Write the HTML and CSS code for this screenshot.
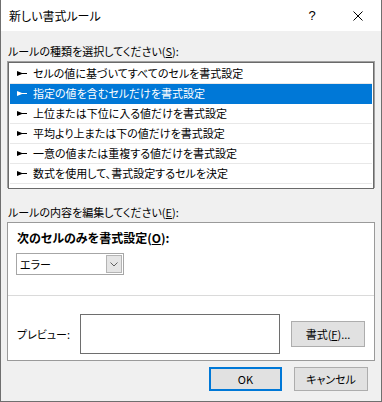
FILE: index.html
```html
<!DOCTYPE html>
<html lang="ja">
<head>
    <meta charset="UTF-8">
    <meta name="viewport" content="width=device-width, initial-scale=1.0">
    <title>新しい書式ルール</title>
    <link rel="stylesheet" href="styles.css">
</head>
<body>
    <div class="window">
        <div class="titlebar">
            <span class="title">新しい書式ルール</span>
            <span class="caption-btn help">?</span>
            <span class="caption-btn close">
                <svg width="10" height="10" viewBox="0 0 10 10"><path d="M0.5 0.5L9.5 9.5M9.5 0.5L0.5 9.5" stroke="#000" stroke-width="1"/></svg>
            </span>
        </div>

        <div class="content">
            <div class="label first">ルールの種類を選択してください(<u>S</u>):</div>
            <div class="listbox">
                <ul class="rules">
                    <li><svg class="arrow" width="10" height="5" viewBox="0 0 10 5"><path d="M0 0L5 2H10V3H5L0 5Z"/></svg>セルの値に基づいてすべてのセルを書式設定</li>
                    <li class="selected"><svg class="arrow" width="10" height="5" viewBox="0 0 10 5"><path d="M0 0L5 2H10V3H5L0 5Z"/></svg>指定の値を含むセルだけを書式設定</li>
                    <li><svg class="arrow" width="10" height="5" viewBox="0 0 10 5"><path d="M0 0L5 2H10V3H5L0 5Z"/></svg>上位または下位に入る値だけを書式設定</li>
                    <li><svg class="arrow" width="10" height="5" viewBox="0 0 10 5"><path d="M0 0L5 2H10V3H5L0 5Z"/></svg>平均より上または下の値だけを書式設定</li>
                    <li><svg class="arrow" width="10" height="5" viewBox="0 0 10 5"><path d="M0 0L5 2H10V3H5L0 5Z"/></svg>一意の値または重複する値だけを書式設定</li>
                    <li><svg class="arrow" width="10" height="5" viewBox="0 0 10 5"><path d="M0 0L5 2H10V3H5L0 5Z"/></svg>数式を使用して、書式設定するセルを決定</li>
                </ul>
            </div>

            <div class="label second">ルールの内容を編集してください(<u>E</u>):</div>
            <div class="panel">
                <div class="panel-top">
                    <div class="bold-label">次のセルのみを書式設定(<u>O</u>):</div>
                    <div class="dropdown">
                        <span class="dropdown-value">エラー</span>
                        <span class="dropdown-btn">
                            <svg width="8" height="5" viewBox="0 0 8 5"><path d="M0.5 0.5L4 4L7.5 0.5" fill="none" stroke="#606060" stroke-width="1"/></svg>
                        </span>
                    </div>
                </div>
                <div class="panel-bottom">
                    <span class="preview-label">プレビュー:</span>
                    <div class="preview"></div>
                    <button class="btn format">書式(<u>F</u>)...</button>
                </div>
            </div>

            <div class="actions">
                <button class="btn default">OK</button>
                <button class="btn">キャンセル</button>
            </div>
        </div>
    </div>
</body>
</html>
```

FILE: styles.css
```css
body {
    margin: 0;
    padding: 0;
    font-family: "Noto Sans CJK JP", "Noto Sans", sans-serif;
    font-size: 11px;
    font-feature-settings: "palt";
    color: #000;
    background: #fff;
}
u {
    text-decoration: underline;
    text-underline-offset: 1px;
}
.window {
    width: 382px;
    height: 402px;
    box-sizing: border-box;
    border: 1px solid #6f6f6f;
    border-top: none;
    display: flex;
    flex-direction: column;
}
.titlebar {
    height: 31px;
    flex: none;
    display: flex;
    align-items: center;
    background: #fff;
}
.title {
    flex: 1;
    padding-left: 8px;
    font-size: 12px;
}
.caption-btn {
    width: 46px;
    height: 31px;
    display: flex;
    align-items: center;
    justify-content: center;
}
.help {
    font-family: "Liberation Sans", sans-serif;
    font-size: 13px;
}
.content {
    flex: 1;
    background: #f0f0f0;
    padding: 0 6px;
}
.label {
    height: 16px;
    line-height: 16px;
    padding-left: 1px;
}
.label.first {
    margin-top: 12px;
}
.label.second {
    margin-top: 16px;
}
.listbox {
    margin-top: 2px;
    border: 1px solid #a0a0a0;
    height: 125px;
    background: #fff;
}
.rules {
    list-style: none;
    margin: 0;
    padding: 1px;
    height: 123px;
    border: 1px solid #6a6a6a;
    background: #fff;
}
.rules li {
    height: 19px;
    line-height: 19px;
    border-bottom: 1px solid #e8e8e8;
    display: flex;
    align-items: center;
    white-space: nowrap;
}
.rules li.selected {
    background: #0078d7;
    color: #fff;
    border-bottom-color: #0078d7;
}
.arrow {
    margin-left: 7px;
    margin-right: 6px;
    fill: #000;
}
.selected .arrow {
    fill: #fff;
}
.panel {
    margin-top: 2px;
    border: 1px solid #9a9a9a;
    background: #fff;
}
.panel-top {
    height: 73px;
    box-sizing: border-box;
    padding: 7px 0 0 9px;
    border-bottom: 1px solid #dadada;
}
.bold-label {
    font-weight: bold;
    font-size: 12px;
    height: 16px;
    line-height: 16px;
}
.dropdown {
    margin-top: 7px;
    margin-left: -1px;
    width: 108px;
    height: 22px;
    box-sizing: border-box;
    border: 1px solid #a6a6a6;
    display: flex;
    align-items: center;
}
.dropdown-value {
    flex: 1;
    padding-left: 3px;
}
.dropdown-btn {
    width: 16px;
    height: 18px;
    margin-right: 1px;
    border: 1px solid #b4b4b4;
    background: #e5e5e5;
    display: flex;
    align-items: center;
    justify-content: center;
    box-sizing: border-box;
}
.panel-bottom {
    display: flex;
    align-items: center;
    padding: 18px 0 6px 9px;
}
.preview-label {
    width: 63px;
    flex: none;
}
.preview {
    width: 200px;
    height: 40px;
    box-sizing: border-box;
    border: 1px solid #6e6e6e;
    background: #fff;
}
.btn {
    font-family: inherit;
    font-size: 11px;
    font-feature-settings: "palt";
    color: #000;
    background: #e1e1e1;
    border: 1px solid #adadad;
    padding: 0;
    width: 74px;
    height: 24px;
}
.format {
    margin-left: 11px;
    height: 26px;
}
.actions {
    display: flex;
    justify-content: flex-end;
    gap: 12px;
    margin-top: 6px;
    padding-right: 7px;
}
.btn.default {
    border: 2px solid #0078d7;
    width: 73px;
}
```
